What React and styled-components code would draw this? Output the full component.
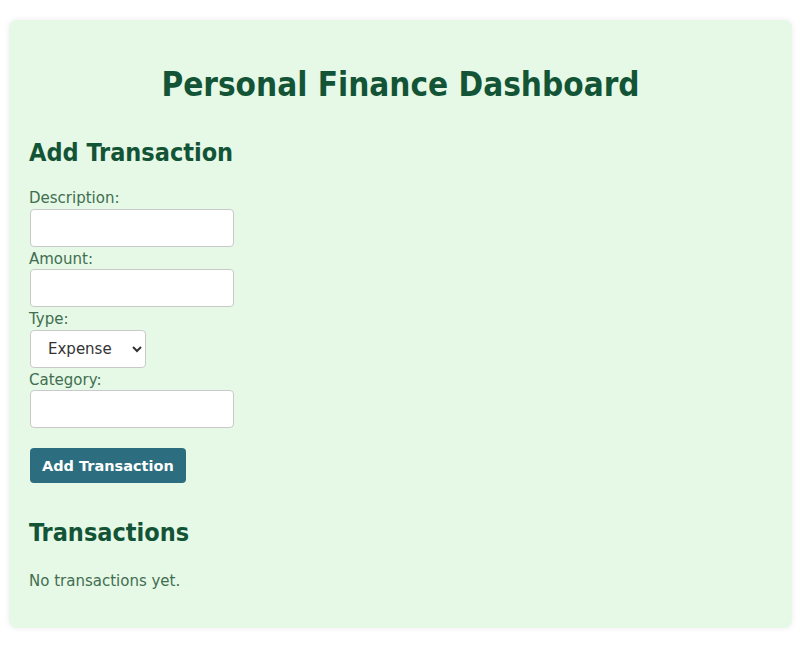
import React, { useState } from 'react';
import styled, { createGlobalStyle } from 'styled-components';

const GlobalStyle = createGlobalStyle`
    body {
        margin: 0;
        background: #ffffff;
        font-family: "DejaVu Sans", sans-serif;
    }
`;

const Page = styled.div`
    padding: 20px 8px 20px 9px;
`;

const Dashboard = styled.div`
    background: #e6f8e6;
    border-radius: 8px;
    box-shadow: 0 0 6px rgba(0, 0, 0, 0.08);
    padding: 28px 20px 38px 20px;
`;

const Title = styled.h1`
    margin: 17px 0 34px;
    text-align: center;
    font-family: "DejaVu Sans Condensed", "DejaVu Sans", sans-serif;
    font-size: 33px;
    font-weight: bold;
    color: #135436;
`;

const SectionTitle = styled.h2`
    margin: ${props => props.margin || '0'};
    font-family: "DejaVu Sans Condensed", "DejaVu Sans", sans-serif;
    font-size: 25px;
    font-weight: bold;
    color: #135436;
`;

const Form = styled.form`
    display: flex;
    flex-direction: column;
    align-items: flex-start;
    margin-top: 23px;
`;

const Label = styled.label`
    font-size: 15px;
    color: #416e50;
    line-height: 16px;
    margin-bottom: 2.5px;
`;

const Input = styled.input`
    box-sizing: border-box;
    width: 204px;
    height: 38px;
    margin: 0 0 4px 1px;
    border: 1px solid #c9c9c9;
    border-radius: 4px;
    background: #ffffff;
    font-size: 14px;
    padding: 0 8px;
`;

const Select = styled.select`
    box-sizing: border-box;
    width: 116px;
    height: 38px;
    margin: 0 0 4px 1px;
    border: 1px solid #c9c9c9;
    border-radius: 4px;
    background: #ffffff;
    font-family: "DejaVu Sans", sans-serif;
    font-size: 15px;
    color: #333333;
    padding: 0 6px 0 13px;
`;

const SubmitButton = styled.button`
    margin-top: 16px;
    margin-left: 1px;
    height: 35px;
    padding: 0 12px;
    border: none;
    border-radius: 4px;
    background: #2c6e7f;
    color: #ffffff;
    font-family: "DejaVu Sans", sans-serif;
    font-size: 14.5px;
    font-weight: bold;
    cursor: pointer;
`;

const EmptyNote = styled.p`
    margin: 25px 0 0;
    font-size: 15px;
    color: #416e50;
`;

const App = () => {
    const [form, setForm] = useState({ description: '', amount: '', type: 'expense', category: '' });
    const [transactions, setTransactions] = useState([]);

    const onChange = e => setForm({ ...form, [e.target.name]: e.target.value });
    const onSubmit = e => {
        e.preventDefault();
        if (!form.description || !form.amount) return;
        setTransactions([...transactions, form]);
        setForm({ description: '', amount: '', type: 'expense', category: '' });
    };

    return (
        <Page>
            <GlobalStyle />
            <Dashboard>
                <Title>Personal Finance Dashboard</Title>
                <SectionTitle>Add Transaction</SectionTitle>
                <Form onSubmit={onSubmit}>
                    <Label htmlFor="description">Description:</Label>
                    <Input id="description" name="description" value={form.description} onChange={onChange} />
                    <Label htmlFor="amount">Amount:</Label>
                    <Input id="amount" name="amount" type="number" value={form.amount} onChange={onChange} />
                    <Label htmlFor="type">Type:</Label>
                    <Select id="type" name="type" value={form.type} onChange={onChange}>
                        <option value="expense">Expense</option>
                        <option value="income">Income</option>
                    </Select>
                    <Label htmlFor="category">Category:</Label>
                    <Input id="category" name="category" value={form.category} onChange={onChange} />
                    <SubmitButton type="submit">Add Transaction</SubmitButton>
                </Form>
                <SectionTitle margin="35px 0 0">Transactions</SectionTitle>
                {transactions.length === 0
                    ? <EmptyNote>No transactions yet.</EmptyNote>
                    : transactions.map((t, i) => (
                        <EmptyNote key={i}>{t.description}: {t.amount} ({t.type}, {t.category})</EmptyNote>
                    ))}
            </Dashboard>
        </Page>
    );
};

export default App;
